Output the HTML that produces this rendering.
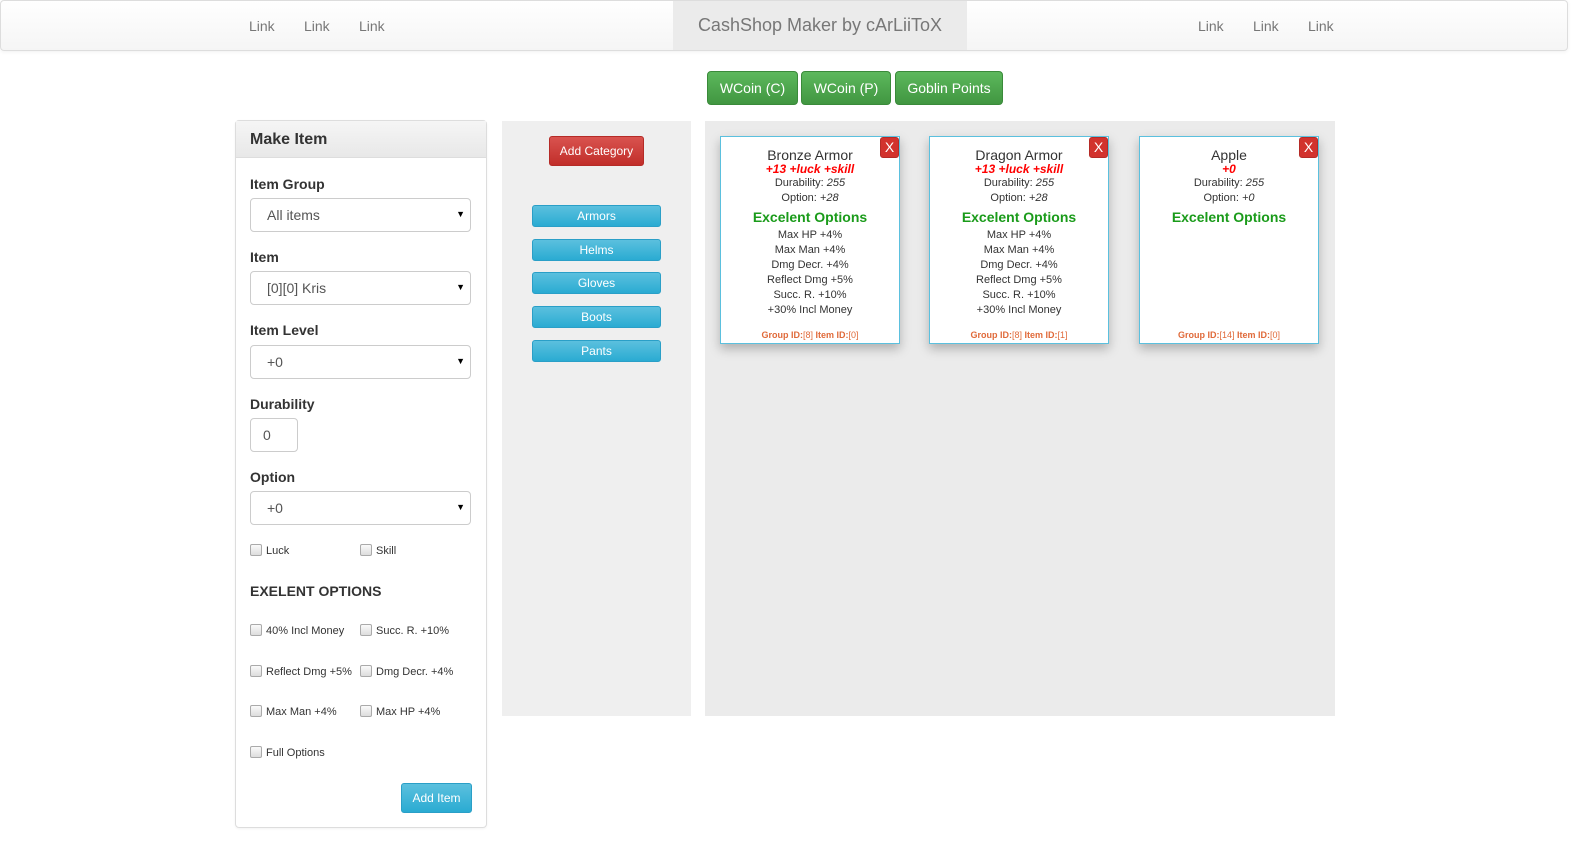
<!DOCTYPE html>
<html><head><meta charset="utf-8"><style>
*{box-sizing:border-box;margin:0;padding:0}
html,body{overflow:hidden}
body{width:1583px;height:856px;background:#fff;font-family:"Liberation Sans",Arial,sans-serif;color:#333;position:relative}
.a{position:absolute}
.nav{left:0;top:0;width:1568px;height:51px;border:1px solid #ddd;border-radius:4px;background:linear-gradient(#fff,#f5f5f5);box-shadow:0 1px 4px rgba(0,0,0,.06)}
.lnk{font-size:14px;color:#777;top:18px}
.brand{left:673px;top:1px;width:294px;height:49px;background:#ebebeb;font-size:18px;color:#777;text-align:center;line-height:48px}
.gb{top:71px;height:34px;border:1px solid #3a8a3a;border-radius:4px;background:linear-gradient(#5cb85c,#419641);color:#fff;font-size:14px;text-align:center;line-height:32px}
.panel{left:235px;top:120px;width:252px;height:708px;border:1px solid #ddd;border-radius:4px;box-shadow:0 1px 2px rgba(0,0,0,.05)}
.ph{left:0;top:0;width:250px;height:37px;background:linear-gradient(#f5f5f5,#e8e8e8);border-bottom:1px solid #ddd;font-size:16px;font-weight:bold;padding:10px 14px}
.lbl{font-size:14px;font-weight:bold;color:#333}
.sel{width:221px;height:34px;border:1px solid #ccc;border-radius:4px;font-size:14px;color:#555;padding:8px 16px;background:#fff}
.dd:after{content:"▼";position:absolute;right:5px;top:10px;font-size:9px;color:#000}
.cb{font-size:11px;color:#333;line-height:13px}
.cb i{display:inline-block;width:12px;height:12px;border:1px solid #aaa;border-radius:2px;background:linear-gradient(#fafafa,#ddd);vertical-align:-2px;margin-right:4px}
.blue{border:1px solid #2a9fc7;border-radius:3px;background:linear-gradient(#5bc0de,#2aabd2);color:#fff;text-align:center}
.card{top:136px;width:180px;height:208px;border:1px solid #5bc0de;background:#fff;box-shadow:0 5px 10px rgba(0,0,0,.25);text-align:center;font-size:11px;color:#333;line-height:15px}
.card .t{font-size:14px;margin-top:10px;line-height:16px}
.card .r{color:red;font-style:italic;font-weight:bold;font-size:12px;line-height:13px}
.card .g{color:#1a9b1a;font-weight:bold;font-size:14px;line-height:22px}
.card .id{position:absolute;bottom:0;left:0;width:100%;color:#e06a3a;font-size:9px;font-weight:bold}
.card .id span{font-weight:normal}
.x{position:absolute;right:0;top:0;width:19px;height:21px;background:#d2322d;border:1px solid #b52b27;border-radius:3px;color:#fff;font-size:14px;line-height:19px;text-align:center}
</style></head><body>
<div class="a nav"></div>
<div class="a lnk" style="left:249px">Link</div>
<div class="a lnk" style="left:304px">Link</div>
<div class="a lnk" style="left:359px">Link</div>
<div class="a brand">CashShop Maker by cArLiiToX</div>
<div class="a lnk" style="left:1198px">Link</div>
<div class="a lnk" style="left:1253px">Link</div>
<div class="a lnk" style="left:1308px">Link</div>

<div class="a gb" style="left:707px;width:91px">WCoin (C)</div>
<div class="a gb" style="left:801px;width:90px">WCoin (P)</div>
<div class="a gb" style="left:895px;width:108px">Goblin Points</div>

<div class="a panel">
<div class="a ph">Make Item</div>
<div class="a lbl" style="left:14px;top:55px">Item Group</div>
<div class="a sel dd" style="left:14px;top:77px">All items</div>
<div class="a lbl" style="left:14px;top:128px">Item</div>
<div class="a sel dd" style="left:14px;top:150px">[0][0] Kris</div>
<div class="a lbl" style="left:14px;top:201px">Item Level</div>
<div class="a sel dd" style="left:14px;top:224px">+0</div>
<div class="a lbl" style="left:14px;top:275px">Durability</div>
<div class="a sel" style="left:14px;top:297px;width:48px;padding:8px 12px">0</div>
<div class="a lbl" style="left:14px;top:348px">Option</div>
<div class="a sel dd" style="left:14px;top:370px">+0</div>
<div class="a cb" style="left:14px;top:423px"><i></i>Luck</div>
<div class="a cb" style="left:124px;top:423px"><i></i>Skill</div>
<div class="a lbl" style="left:14px;top:462px">EXELENT OPTIONS</div>
<div class="a cb" style="left:14px;top:503px"><i></i>40% Incl Money</div>
<div class="a cb" style="left:124px;top:503px"><i></i>Succ. R. +10%</div>
<div class="a cb" style="left:14px;top:544px"><i></i>Reflect Dmg +5%</div>
<div class="a cb" style="left:124px;top:544px"><i></i>Dmg Decr. +4%</div>
<div class="a cb" style="left:14px;top:584px"><i></i>Max Man +4%</div>
<div class="a cb" style="left:124px;top:584px"><i></i>Max HP +4%</div>
<div class="a cb" style="left:14px;top:625px"><i></i>Full Options</div>
<div class="a blue" style="left:165px;top:662px;width:71px;height:30px;font-size:12px;line-height:28px">Add Item</div>
</div>

<div class="a" style="left:502px;top:121px;width:189px;height:595px;background:#efefef"></div>
<div class="a" style="left:549px;top:136px;width:95px;height:30px;background:linear-gradient(#d9534f,#c12e2a);border:1px solid #b52b27;border-radius:3px;color:#fff;font-size:12px;text-align:center;line-height:28px">Add Category</div>
<div class="a blue" style="left:532px;top:205px;width:129px;height:22px;font-size:12px;line-height:20px">Armors</div>
<div class="a blue" style="left:532px;top:239px;width:129px;height:22px;font-size:12px;line-height:20px">Helms</div>
<div class="a blue" style="left:532px;top:272px;width:129px;height:22px;font-size:12px;line-height:20px">Gloves</div>
<div class="a blue" style="left:532px;top:306px;width:129px;height:22px;font-size:12px;line-height:20px">Boots</div>
<div class="a blue" style="left:532px;top:340px;width:129px;height:22px;font-size:12px;line-height:20px">Pants</div>

<div class="a" style="left:705px;top:121px;width:630px;height:595px;background:#ebebeb"></div>

<div class="a card" style="left:720px">
<div class="x">X</div>
<div class="t">Bronze Armor</div><div class="r">+13 +luck +skill</div>
<div>Durability: <i>255</i></div><div>Option: <i>+28</i></div>
<div class="g">Excelent Options</div>
<div>Max HP +4%</div><div>Max Man +4%</div><div>Dmg Decr. +4%</div><div>Reflect Dmg +5%</div><div>Succ. R. +10%</div><div>+30% Incl Money</div>
<div class="id">Group ID:<span>[8]</span> Item ID:<span>[0]</span></div>
</div>
<div class="a card" style="left:929px">
<div class="x">X</div>
<div class="t">Dragon Armor</div><div class="r">+13 +luck +skill</div>
<div>Durability: <i>255</i></div><div>Option: <i>+28</i></div>
<div class="g">Excelent Options</div>
<div>Max HP +4%</div><div>Max Man +4%</div><div>Dmg Decr. +4%</div><div>Reflect Dmg +5%</div><div>Succ. R. +10%</div><div>+30% Incl Money</div>
<div class="id">Group ID:<span>[8]</span> Item ID:<span>[1]</span></div>
</div>
<div class="a card" style="left:1139px">
<div class="x">X</div>
<div class="t">Apple</div><div class="r">+0</div>
<div>Durability: <i>255</i></div><div>Option: <i>+0</i></div>
<div class="g">Excelent Options</div>
<div class="id">Group ID:<span>[14]</span> Item ID:<span>[0]</span></div>
</div>
</body></html>
